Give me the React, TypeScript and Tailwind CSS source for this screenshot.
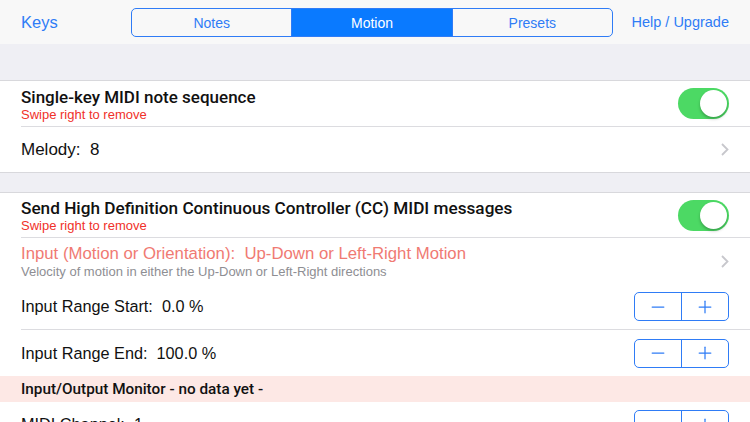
import { Minus, Plus } from "lucide-react";

const font = { fontFamily: '"Liberation Sans", Roboto, sans-serif' };
const medium = { fontFamily: 'Roboto, "Liberation Sans", sans-serif' };

const Toggle = () => (
  <div className="relative w-[51px] h-[31px] rounded-full bg-[#4cd964]">
    <div className="absolute right-[2px] top-[2px] w-[27px] h-[27px] rounded-full bg-white shadow-[0_2px_3px_rgba(0,0,0,0.25)]" />
  </div>
);

const Chevron = () => (
  <svg width="8" height="13" viewBox="0 0 8 13" fill="none">
    <polyline points="1,1 6.5,6.5 1,12" stroke="#c7c7cc" strokeWidth="1.8" />
  </svg>
);

const Stepper = () => (
  <div className="flex w-[95px] h-[29px] rounded-[5px] border border-[#2f7cf6] text-[#2f7cf6]">
    <div className="flex-1 flex items-center justify-center border-r border-[#2f7cf6]">
      <Minus className="w-[20px] h-[20px]" strokeWidth={1.5} />
    </div>
    <div className="flex-1 flex items-center justify-center">
      <Plus className="w-[20px] h-[20px]" strokeWidth={1.5} />
    </div>
  </div>
);

const Segment = ({ label, active }: { label: string; active?: boolean }) => (
  <div
    className={
      "flex-1 flex items-center justify-center text-[14px] pt-px " +
      (active ? "bg-[#0a7aff] text-white" : "text-[#2f7cf6]")
    }
  >
    {label}
  </div>
);

export default function App() {
  return (
    <div className="w-[750px] h-[422px] overflow-hidden bg-[#efeff4]" style={font}>
      {/* Nav bar */}
      <div className="h-[44px] flex items-center bg-[#f8f8f8] pt-px">
        <div className="w-[131px] pl-[21px]">
          <span className="text-[16.5px] text-[#2f7cf6]">Keys</span>
        </div>
        <div className="flex w-[482px] h-[29px] rounded-[5px] border border-[#2f7cf6] overflow-hidden">
          <Segment label="Notes" />
          <div className="w-px bg-[#2f7cf6]" />
          <Segment label="Motion" active />
          <div className="w-px bg-[#2f7cf6]" />
          <Segment label="Presets" />
        </div>
        <div className="flex-1 flex justify-end pr-[21px]">
          <span className="text-[14.5px] text-[#2f7cf6]">Help / Upgrade</span>
        </div>
      </div>

      <div className="h-[36px]" />

      {/* Section 1 */}
      <div className="bg-white border-t border-[#d8d8dc]">
        <div className="h-[45px] flex items-center justify-between px-[21px]">
          <div className="flex flex-col pt-[2px]">
            <span className="text-[17px] font-medium text-[#111] leading-[19px]" style={medium}>
              Single-key MIDI note sequence
            </span>
            <span className="text-[13px] text-[#f0312a] leading-[15px]">Swipe right to remove</span>
          </div>
          <Toggle />
        </div>
        <div className="ml-[21px] h-px bg-[#dcdce0]" />
        <div className="h-[45px] flex items-center justify-between px-[21px]">
          <span className="text-[17px] text-[#111]">Melody:&nbsp; 8</span>
          <Chevron />
        </div>
      </div>

      <div className="h-[20px] border-t border-[#d8d8dc]" />

      {/* Section 2 */}
      <div className="bg-white border-t border-[#d8d8dc]">
        <div className="h-[44px] flex items-center justify-between px-[21px]">
          <div className="flex flex-col pt-[2px]">
            <span className="text-[17.2px] font-medium text-[#111] leading-[19px]" style={medium}>
              Send High Definition Continuous Controller (CC) MIDI messages
            </span>
            <span className="text-[13px] text-[#f0312a] leading-[15px]">Swipe right to remove</span>
          </div>
          <Toggle />
        </div>
        <div className="ml-[21px] h-px bg-[#dcdce0]" />
        <div className="h-[46px] flex items-center justify-between px-[21px]">
          <div className="flex flex-col">
            <span className="text-[16.75px] text-[#f07a73] leading-[20px]">
              Input (Motion or Orientation):&nbsp; Up-Down or Left-Right Motion
            </span>
            <span className="text-[13px] text-[#8e8e93] leading-[15px]">
              Velocity of motion in either the Up-Down or Left-Right directions
            </span>
          </div>
          <Chevron />
        </div>
        <div className="h-[45px] flex items-center justify-between px-[21px]">
          <span className="text-[16.25px] text-[#111]">Input Range Start:&nbsp; 0.0 %</span>
          <Stepper />
        </div>
        <div className="ml-[21px] h-px bg-[#dcdce0]" />
        <div className="h-[46px] flex items-center justify-between px-[21px]">
          <span className="text-[16.25px] text-[#111]">Input Range End:&nbsp; 100.0 %</span>
          <Stepper />
        </div>
        <div className="h-[26px] flex items-center pl-[21px] bg-[#fde8e5]">
          <span className="text-[15.3px] font-medium text-[#111]" style={medium}>
            Input/Output Monitor - no data yet -
          </span>
        </div>
        <div className="h-[45px] flex items-center justify-between px-[21px]">
          <span className="text-[16.25px] text-[#111]">MIDI Channel:&nbsp; 1</span>
          <Stepper />
        </div>
      </div>
    </div>
  );
}
